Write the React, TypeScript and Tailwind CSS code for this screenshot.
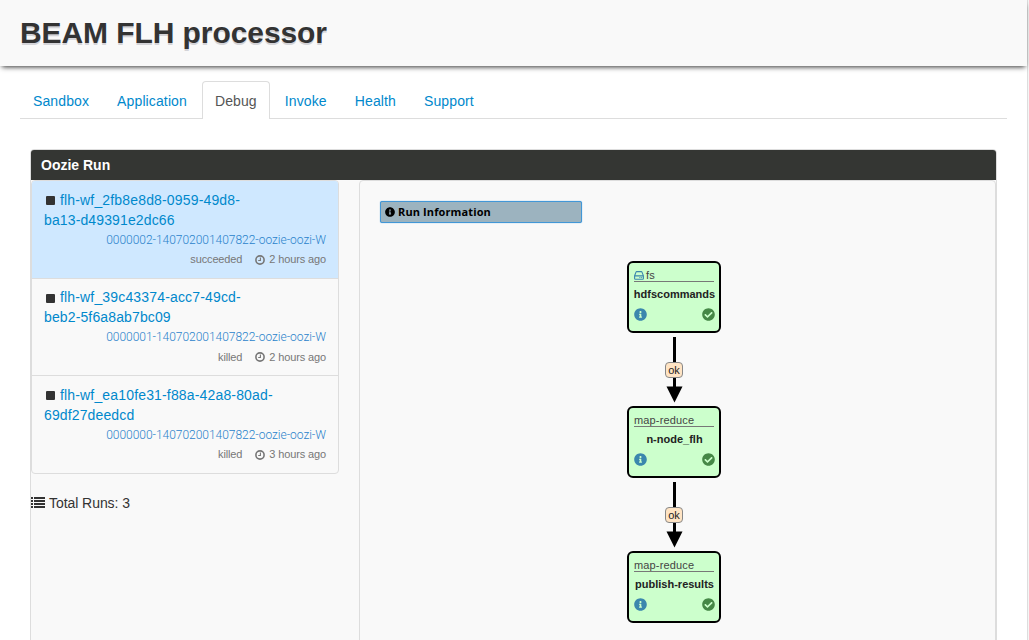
import type { ReactNode } from "react";
import { FaCheckCircle, FaInfoCircle } from "react-icons/fa";

type Run = { first: string; second: string; id: string; status: string; ago: string; selected?: boolean };

const runs: Run[] = [
  { first: "flh-wf_2fb8e8d8-0959-49d8-", second: "ba13-d49391e2dc66", id: "0000002-140702001407822-oozie-oozi-W", status: "succeeded", ago: "2 hours ago", selected: true },
  { first: "flh-wf_39c43374-acc7-49cd-", second: "beb2-5f6a8ab7bc09", id: "0000001-140702001407822-oozie-oozi-W", status: "killed", ago: "2 hours ago" },
  { first: "flh-wf_ea10fe31-f88a-42a8-80ad-", second: "69df27deedcd", id: "0000000-140702001407822-oozie-oozi-W", status: "killed", ago: "3 hours ago" },
];

const tabs = ["Sandbox", "Application", "Debug", "Invoke", "Health", "Support"];

function Tabs() {
  return (
    <nav className="mx-5 mt-[15px] flex h-[38px] border-b border-[#ddd] text-[14px] leading-5 tracking-[0.12px]">
      {tabs.map((tab) => (
        <a
          key={tab}
          className={
            tab === "Debug"
              ? "mr-0.5 h-[38px] rounded-t border border-b-0 border-[#ddd] bg-white px-3 pt-[9px] text-[#555]"
              : "mr-0.5 h-[37px] border border-b-0 border-transparent px-3 pt-[9px] text-[#0088cc]"
          }
        >
          {tab}
        </a>
      ))}
    </nav>
  );
}

function ClockIcon() {
  return (
    <svg viewBox="0 0 10 10" className="mr-[4px] ml-[13px] size-[10px] fill-none stroke-[#777]">
      <circle cx="5" cy="5" r="4.1" strokeWidth="1.6" />
      <path d="M5.4 2.4V5.5H3.2" strokeWidth="1.1" />
    </svg>
  );
}

function RunItem({ run }: { run: Run }) {
  return (
    <li className={run.selected ? "h-[97.5px] border-b border-[#ddd] bg-[#cfe8ff] px-3 pt-[8.9px]" : "h-[97.5px] border-b border-[#ddd] px-3 pt-[8.9px] last:border-b-0"}>
      <div className="flex h-5 items-center text-[14px] leading-5 tracking-[0.16px] whitespace-nowrap text-[#0088cc]">
        <span className="mt-[2px] mr-[5px] ml-[2px] size-[9px] rounded-[1px] bg-[#333]" />
        {run.first}
      </div>
      <div className="h-5 text-[14px] leading-5 tracking-[0.13px] text-[#0088cc]">{run.second}</div>
      <div className="h-5 text-right font-[Roboto] text-[12px] leading-5 font-light tracking-[-0.03px] whitespace-nowrap text-[#2b83cb]">{run.id}</div>
      <div className="mt-[0.2px] flex h-[19px] items-center justify-end text-[11px] tracking-[-0.13px] text-[#777]">
        <span>{run.status}</span>
        <ClockIcon />
        <span>{run.ago}</span>
      </div>
    </li>
  );
}

function ListIcon() {
  return (
    <svg viewBox="0 0 14 12" className="h-3 w-[14px] fill-[#333]" shapeRendering="crispEdges">
      {[0, 3, 6, 9].map((y) => (
        <g key={y}>
          <rect x="0" y={y} width="2" height="2" />
          <rect x="3" y={y} width="11" height="2" />
        </g>
      ))}
    </svg>
  );
}

function DriveIcon() {
  return (
    <svg viewBox="0 0 10 9" className="mt-px h-[9px] w-[10px] fill-none stroke-[#3a87ad]">
      <path d="M0.6 4.8L2 1.1Q2.2 0.6 2.7 0.6H7.3Q7.8 0.6 8 1.1L9.4 4.8V7.4Q9.4 8.2 8.6 8.2H1.4Q0.6 8.2 0.6 7.4ZM0.6 4.9H9.4" strokeWidth="1.1" />
      <path d="M5.4 6.6H6.4M7.2 6.6H8.2" strokeWidth="1" />
    </svg>
  );
}

function ActionNode({ kind, name, icon }: { kind: string; name: string; icon?: ReactNode }) {
  return (
    <div className="h-[72px] w-[94px] rounded-[6px] border-2 border-black bg-[#ccffcc] px-[5px] pt-1">
      <div className="flex h-[15px] items-center gap-0.5 border-b border-[#777] pt-[2px] text-[11px] leading-[14px] tracking-[0.15px] text-[#444]">
        {icon}
        {kind}
      </div>
      <div className="mt-[5px] flex h-[14px] justify-center pl-px text-[11px] leading-[14px] font-bold whitespace-nowrap text-[#222]">{name}</div>
      <div className="-mr-px mt-[7px] flex justify-between">
        <FaInfoCircle className="size-[13px] text-[#3a87ad]" />
        <FaCheckCircle className="size-[13px] text-[#468847]" />
      </div>
    </div>
  );
}

function Arrow() {
  return (
    <div className="relative flex h-[73px] w-[20px] justify-center">
      <svg viewBox="0 0 20 73" className="h-[73px] w-5">
        <rect x="9" y="4" width="3" height="52" />
        <path d="M2.5 53.5H18.5L10.5 69.5Z" />
      </svg>
      <span className="absolute top-[29px] left-[1px] h-[16px] w-[18px] rounded-[4px] border border-[#888] bg-[#ffe4c4] text-center text-[11px] leading-[14px] text-[#222]">ok</span>
    </div>
  );
}

export default function App() {
  return (
    <div className="flex h-[640px] w-[1029px] overflow-hidden bg-[#f5f5f5] font-['Liberation_Sans',sans-serif] text-[#333]">
      <div className="flex w-[1028px] flex-col border-r border-[#ddd] bg-white">
        <header className="h-[66px] shrink-0 bg-[#f9f9f9] pt-[13px] pl-5 shadow-[0_3px_5px_-2px_#333]">
          <h1 className="text-[30px] leading-10 font-bold tracking-[-0.08px] [text-shadow:0_2px_0_#d4d4d8]">BEAM FLH processor</h1>
        </header>
        <Tabs />
        <section className="mt-[30px] mr-[30px] ml-[30px] flex h-[600px] w-[967px] shrink-0 flex-col rounded-t border border-[#ddd] bg-[#f9f9f9]">
          <h2 className="h-[30px] shrink-0 rounded-t-[3px] bg-[#343633] pl-[10px] text-[14px] leading-[30px] font-bold text-white">Oozie Run</h2>
          <div className="flex flex-1">
            <aside className="w-[328px]">
              <ul className="h-[294px] w-[308px] overflow-hidden rounded border border-[#ddd]">
                {runs.map((run) => (
                  <RunItem key={run.id} run={run} />
                ))}
              </ul>
              <div className="mt-[19px] flex h-5 items-center gap-1 text-[14px] tracking-[-0.06px]">
                <ListIcon />
                <span>Total Runs: 3</span>
              </div>
            </aside>
            <main className="flex w-[637px] flex-col rounded-t border border-[#ddd]">
              <div className="mt-5 ml-5 flex h-[22px] w-[202px] items-center gap-[3px] rounded-[2px] border border-[#4297d7] bg-[#9cb3bf] pl-1 font-['Open_Sans'] text-[11px] font-bold tracking-[0.12px] text-black shadow-[0_0_1px_#4297d7]">
                <FaInfoCircle className="size-[10px]" />
                <span>Run Information</span>
              </div>
              <div className="mt-[38px] ml-[267px] flex w-[94px] flex-col items-center">
                <ActionNode kind="fs" name="hdfscommands" icon={<DriveIcon />} />
                <Arrow />
                <ActionNode kind="map-reduce" name="n-node_flh" />
                <Arrow />
                <ActionNode kind="map-reduce" name="publish-results" />
              </div>
            </main>
          </div>
        </section>
      </div>
    </div>
  );
}
